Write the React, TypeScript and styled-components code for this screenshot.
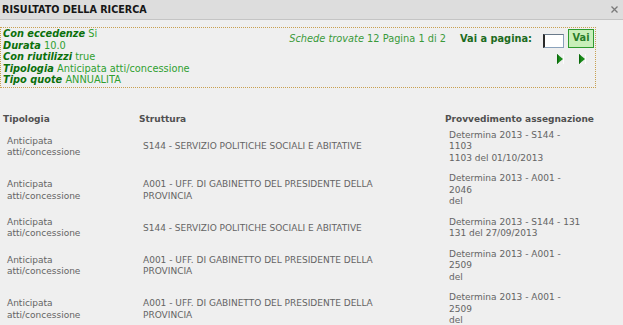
import React from "react"
import styled, { createGlobalStyle } from "styled-components"

const GlobalStyle = createGlobalStyle`
	body {
		margin: 0;
		background: #efefef;
		font-family: "DejaVu Sans", Verdana, sans-serif;
	}
`

interface Filter {
	label: string
	value: string
}

interface Row {
	tipologia: string
	struttura: string
	provvedimento: string[]
}

const filters: Filter[] = [
	{ label: "Con eccedenze", value: "Si" },
	{ label: "Durata", value: "10.0" },
	{ label: "Con riutilizzi", value: "true" },
	{ label: "Tipologia", value: "Anticipata atti/concessione" },
	{ label: "Tipo quote", value: "ANNUALITA" },
]

const rows: Row[] = [
	{
		tipologia: "Anticipata atti/concessione",
		struttura: "S144 - SERVIZIO POLITICHE SOCIALI E ABITATIVE",
		provvedimento: ["Determina 2013 - S144 - 1103", "1103 del 01/10/2013"],
	},
	{
		tipologia: "Anticipata atti/concessione",
		struttura: "A001 - UFF. DI GABINETTO DEL PRESIDENTE DELLA PROVINCIA",
		provvedimento: ["Determina 2013 - A001 - 2046", "del"],
	},
	{
		tipologia: "Anticipata atti/concessione",
		struttura: "S144 - SERVIZIO POLITICHE SOCIALI E ABITATIVE",
		provvedimento: ["Determina 2013 - S144 - 131", "131 del 27/09/2013"],
	},
	{
		tipologia: "Anticipata atti/concessione",
		struttura: "A001 - UFF. DI GABINETTO DEL PRESIDENTE DELLA PROVINCIA",
		provvedimento: ["Determina 2013 - A001 - 2509", "del"],
	},
	{
		tipologia: "Anticipata atti/concessione",
		struttura: "A001 - UFF. DI GABINETTO DEL PRESIDENTE DELLA PROVINCIA",
		provvedimento: ["Determina 2013 - A001 - 2509", "del"],
	},
]

const TitleBar = styled.div`
	display: flex;
	align-items: center;
	justify-content: space-between;
	height: 19px;
	padding: 0 5px 0 2px;
	background: #dddddd;
	border-bottom: 1px solid #c4c4c4;
`

const Title = styled.span`
	font-size: 9.6px;
	font-weight: bold;
	color: #161616;
`

const Close = styled.span`
	display: flex;
	cursor: pointer;
`

const Content = styled.div`
	padding-top: 7px;
`

const FilterBox = styled.div`
	display: flex;
	justify-content: space-between;
	width: 594px;
	border: 1px dotted #c8a050;
	font-size: 9.8px;
	line-height: 11.6px;
`

const FilterList = styled.div`
	padding: 0 0 1px 2px;
`

const FilterLine = styled.div`
	color: #2f9f2f;
	white-space: nowrap;
`

const FilterLabel = styled.b`
	font-style: italic;
	color: #0b700b;
`

const Pager = styled.div`
	display: flex;
	flex-direction: column;
	align-items: flex-end;
	padding-right: 1px;
`

const PagerTop = styled.div`
	display: flex;
	align-items: center;
`

const Found = styled.span`
	color: #3a9a3a;
	margin-top: 2px;
	i {
		font-style: italic;
	}
`

const GoLabel = styled.b`
	color: #1d6b1d;
	margin: 2px 11px 0 14px;
`

const PageInput = styled.input`
	box-sizing: border-box;
	width: 21px;
	height: 14px;
	margin: 5px 4px 0 0;
	padding: 0;
	background: #fff;
	border: 1px solid #8aa2bc;
	border-left: 2px solid #2a2a2a;
	border-top-color: #6a7a8a;
`

const GoButton = styled.button`
	box-sizing: border-box;
	width: 26px;
	height: 19px;
	margin-top: 1px;
	padding: 0 0 2px;
	background: #c8efb9;
	border: 1px solid #2f9a2f;
	color: #2a7d2a;
	font-family: inherit;
	font-size: 9.8px;
	font-weight: bold;
`

const Arrows = styled.div`
	display: flex;
	gap: 15px;
	margin: 6px 8px 0 0;
`

const Arrow = styled.svg`
	display: block;
	cursor: pointer;
`

const Table = styled.table`
	table-layout: fixed;
	width: 592px;
	margin-top: 26px;
	border-collapse: collapse;
	font-size: 9px;
	line-height: 11.5px;
`

const Head = styled.th`
	padding: 0 0 0 3px;
	height: 12px;
	text-align: left;
	white-space: nowrap;
	color: #505050;
	font-weight: bold;
`

const Cell = styled.td<{ $gap: number }>`
	padding: 4px ${props => props.$gap}px 5px 7px;
	vertical-align: middle;
	color: #646464;
`

const NextArrow: React.FC = () => (
	<Arrow width="7" height="10" viewBox="0 0 7 10">
		<polygon points="0,0 6,5 0,10" fill="#1a8a1a" />
		<polygon points="0,0 1.4,1.2 1.4,8.8 0,10" fill="#0c6a0c" />
		<rect x="6" y="0" width="1" height="10" fill="#ffffff" opacity="0.8" />
	</Arrow>
)

const App: React.FC = () => {
	return (
		<>
			<GlobalStyle />
			<TitleBar>
				<Title>RISULTATO DELLA RICERCA</Title>
				<Close>
					<svg width="7" height="7" viewBox="0 0 7 7">
						<path d="M0.5 0.5 L6.5 6.5 M6.5 0.5 L0.5 6.5" stroke="#7a7a7a" strokeWidth="1.3" />
					</svg>
				</Close>
			</TitleBar>
			<Content>
				<FilterBox>
					<FilterList>
						{filters.map(f => (
							<FilterLine key={f.label}>
								<FilterLabel>{f.label}</FilterLabel> {f.value}
							</FilterLine>
						))}
					</FilterList>
					<Pager>
						<PagerTop>
							<Found>
								<i>Schede trovate</i> 12 Pagina 1 di 2
							</Found>
							<GoLabel>Vai a pagina:</GoLabel>
							<PageInput type="text" />
							<GoButton>Vai</GoButton>
						</PagerTop>
						<Arrows>
							<NextArrow />
							<NextArrow />
						</Arrows>
					</Pager>
				</FilterBox>
				<Table>
					<colgroup>
						<col style={{ width: 136 }} />
						<col style={{ width: 306 }} />
						<col style={{ width: 150 }} />
					</colgroup>
					<thead>
						<tr>
							<Head>Tipologia</Head>
							<Head>Struttura</Head>
							<Head>Provvedimento assegnazione</Head>
						</tr>
					</thead>
					<tbody>
						{rows.map((r, i) => (
							<tr key={i}>
								<Cell $gap={30}>{r.tipologia}</Cell>
								<Cell $gap={30}>{r.struttura}</Cell>
								<Cell $gap={9}>
									{r.provvedimento[0]}
									<br />
									{r.provvedimento[1]}
								</Cell>
							</tr>
						))}
					</tbody>
				</Table>
			</Content>
		</>
	)
}

export default App
